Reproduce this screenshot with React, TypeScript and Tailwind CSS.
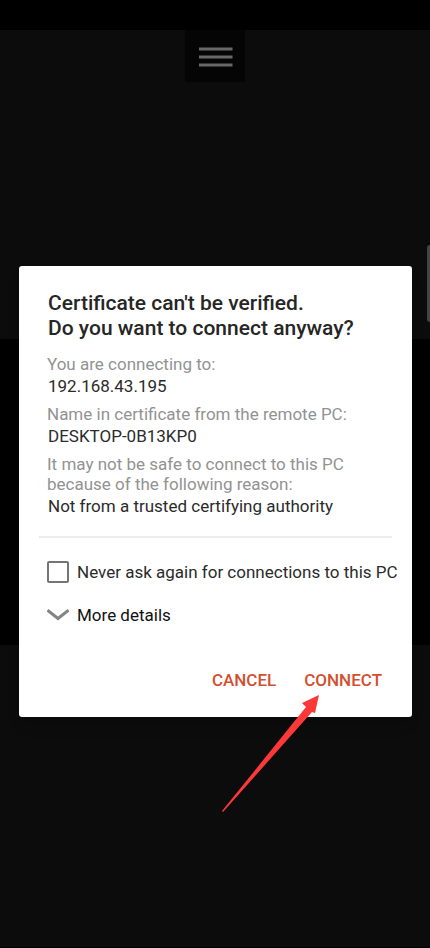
import { type ReactNode } from 'react';

function Detail({ label, children }: { label: string; children: ReactNode }) {
  return (
    <div>
      <dt className="text-[#929292]">{label}</dt>
      <dd className="mt-0.5 pl-px text-[#2b2b2b]">{children}</dd>
    </div>
  );
}

function RemoteDesktop() {
  return (
    <div className="flex min-h-screen flex-col bg-black pt-[30px] pb-px">
      <div className="flex h-[309px] items-start justify-center bg-[#0c0c0c]">
        <button
          type="button"
          aria-label="Menu"
          className="flex h-[52px] w-[60px] items-center justify-center bg-[#050505] pt-px pl-0.5"
        >
          <svg viewBox="0 0 34 20" className="h-5 w-[34px]" fill="#686868" aria-hidden="true">
            <rect x="0" y="0.5" width="33.5" height="3" />
            <rect x="0" y="8.5" width="33.5" height="3" />
            <rect x="0" y="16.5" width="33.5" height="3" />
          </svg>
        </button>
      </div>
      <div className="h-[306px]" />
      <div className="flex-1 bg-[#0c0c0c]" />
    </div>
  );
}

export default function App() {
  return (
    <div className="relative min-h-screen bg-black font-[Roboto,sans-serif]">
      <RemoteDesktop />
      <div className="absolute top-[245px] right-0 h-[77px] w-[3px] rounded-l-sm bg-[#444444]" />

      <div className="absolute inset-0 flex items-center justify-center pt-[35px] pr-[18px] pl-[19px]">
        <section
          role="dialog"
          aria-labelledby="dialog-title"
          className="relative w-full rounded-[3px] bg-white px-5 pt-[25px] pb-[19px] shadow-lg"
        >
          <div className="px-2">
            <h1 id="dialog-title" className="pl-px text-[21px] leading-[25px] font-medium text-[#262626]">
              Certificate can't be verified.
              <br />
              Do you want to connect anyway?
            </h1>
            <dl className="mt-[13px] flex flex-col gap-2 text-[17px] leading-5">
              <Detail label="You are connecting to:">192.168.43.195</Detail>
              <Detail label="Name in certificate from the remote PC:">DESKTOP-0B13KP0</Detail>
              <Detail label="It may not be safe to connect to this PC because of the following reason:">
                Not from a trusted certifying authority
              </Detail>
            </dl>
          </div>

          <hr className="mt-5 border-0 border-t-2 border-[#ececec]" />

          <div className="mt-[22px] flex flex-col gap-[19px] pl-2 text-[17px] leading-6 text-[#2b2b2b]">
            <label className="flex items-center gap-2 whitespace-nowrap">
              <input
                type="checkbox"
                className="size-[22px] shrink-0 appearance-none rounded-[2px] border-2 border-[#757575] bg-white"
              />
              Never ask again for connections to this PC
            </label>
            <button type="button" className="flex items-center gap-2 self-start text-[#111111]">
              <svg viewBox="0 0 22 12" className="h-3 w-[22px]" fill="none" aria-hidden="true">
                <path d="M0.5 1.2 L11 9.5 L21.5 1.2" stroke="#858585" strokeWidth="3" />
              </svg>
              More details
            </button>
          </div>

          <div className="mt-[35px] flex justify-end gap-3 pr-0.5 text-[17px] leading-5 font-medium text-[#d2502f]">
            <button type="button" className="px-2 py-2">
              CANCEL
            </button>
            <button type="button" className="px-2 py-2">
              CONNECT
            </button>
          </div>

          <svg
            viewBox="0 0 98 118"
            className="pointer-events-none absolute right-[92px] -bottom-24 h-[118px] w-[98px]"
            fill="#fd3838"
            aria-hidden="true"
          >
            <path d="M97 0 L80 8 L84 12 L0 116 L1 117 L90 17 L93 18 Z" />
          </svg>
        </section>
      </div>
    </div>
  );
}
